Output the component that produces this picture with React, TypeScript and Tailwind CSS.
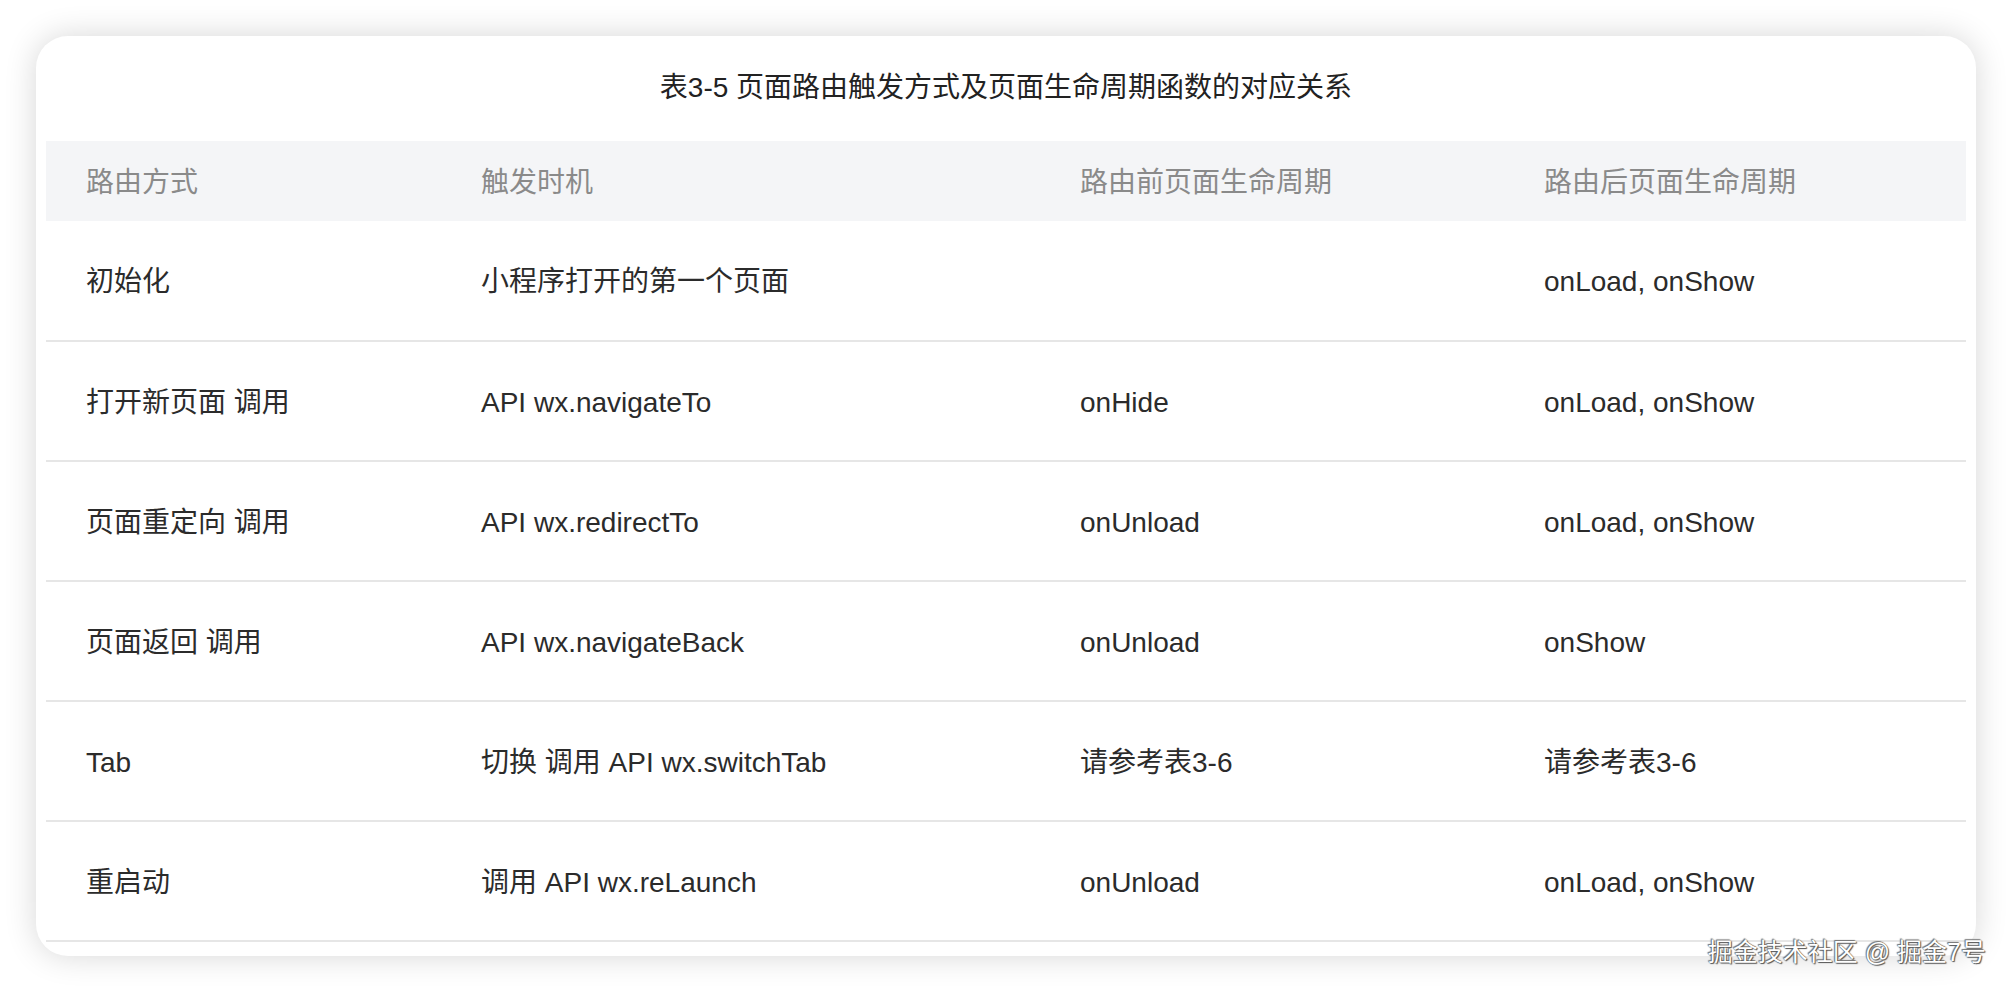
const headers = ["路由方式", "触发时机", "路由前页面生命周期", "路由后页面生命周期"];

const rows: string[][] = [
  ["初始化", "小程序打开的第一个页面", "", "onLoad, onShow"],
  ["打开新页面 调用", "API wx.navigateTo", "onHide", "onLoad, onShow"],
  ["页面重定向 调用", "API wx.redirectTo", "onUnload", "onLoad, onShow"],
  ["页面返回 调用", "API wx.navigateBack", "onUnload", "onShow"],
  ["Tab", "切换 调用 API wx.switchTab", "请参考表3-6", "请参考表3-6"],
  ["重启动", "调用 API wx.reLaunch", "onUnload", "onLoad, onShow"],
];

export default function App() {
  return (
    <div
      className="relative w-[2012px] h-[992px] bg-white overflow-hidden pt-[36px] pl-[36px]"
      style={{ fontFamily: '"Liberation Sans", "Noto Sans CJK SC", sans-serif' }}
    >
      {/* Card */}
      <div className="w-[1940px] h-[920px] bg-white rounded-[32px] shadow-[0_0_32px_rgba(0,0,0,0.16)] px-[10px]">
        <div className="pt-[36px] pb-[37px] text-center text-[28px] leading-[32px] text-[#222]">
          表3-5 页面路由触发方式及页面生命周期函数的对应关系
        </div>
        <table className="w-[1920px] table-fixed border-collapse text-[28px] leading-[32px]">
          <colgroup>
            <col className="w-[395px]" />
            <col className="w-[599px]" />
            <col className="w-[464px]" />
            <col className="w-[462px]" />
          </colgroup>
          <thead>
            <tr className="bg-[#f4f5f7] h-[80px]">
              {headers.map((h) => (
                <th key={h} className="pl-[40px] pt-[4px] text-left font-normal text-[#8a8a8a]">
                  {h}
                </th>
              ))}
            </tr>
          </thead>
          <tbody>
            {rows.map((r, i) => (
              <tr key={i} className="h-[120px] border-b-2 border-[#e6e6e6]">
                {r.map((c, j) => (
                  <td key={j} className="pl-[40px] pt-[3px] text-left text-[#2b2b2b] whitespace-nowrap">
                    {c}
                  </td>
                ))}
              </tr>
            ))}
          </tbody>
        </table>
      </div>

      {/* watermark */}
      <div className="absolute right-[26px] top-[937px] text-[25px] leading-[30px] text-white [text-shadow:0_0_1px_#444,1px_1px_1px_#555,-1px_-1px_1px_#777]">
        掘金技术社区 @ 掘金7号
      </div>
    </div>
  );
}
